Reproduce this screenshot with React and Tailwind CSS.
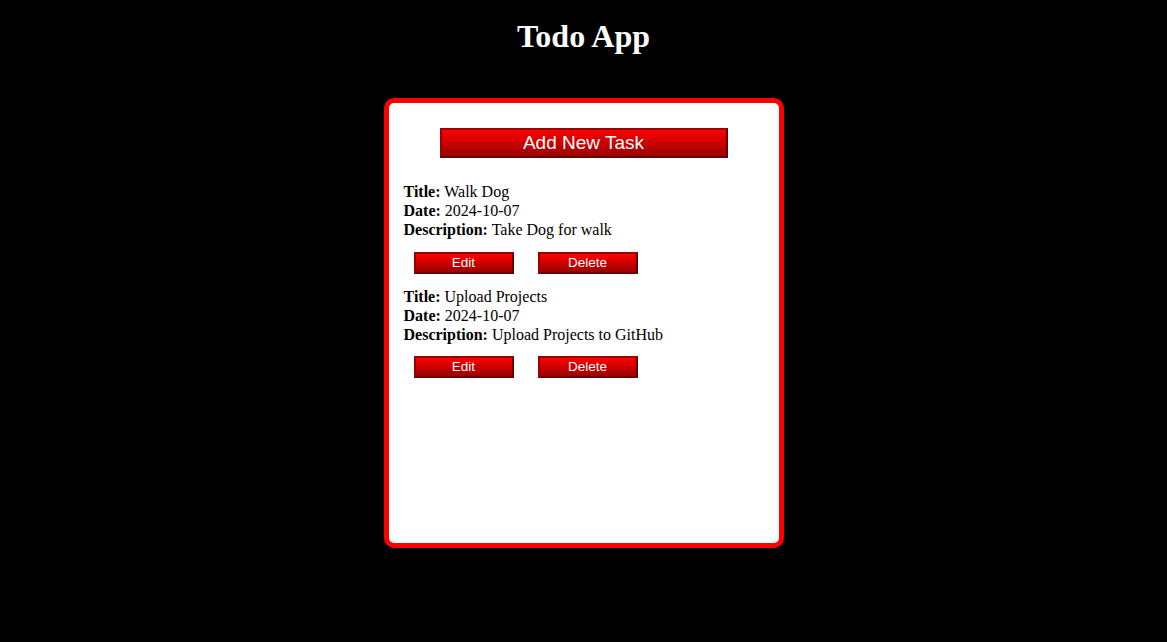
import React from "react";

const tasks = [
  { title: "Walk Dog", date: "2024-10-07", description: "Take Dog for walk" },
  { title: "Upload Projects", date: "2024-10-07", description: "Upload Projects to GitHub" },
];

function SmallButton({ children }) {
  return (
    <button className="w-[100px] h-[22px] border-2 border-solid border-t-[#9a0000] border-l-[#9a0000] border-b-[#6a0000] border-r-[#6a0000] bg-linear-to-b from-[#ff0000] to-[#9a0000] text-white text-[13.5px] leading-[18px] font-['Liberation_Sans',Arial,sans-serif] p-0">
      {children}
    </button>
  );
}

export default function App() {
  return (
    <div className="min-h-[642px] bg-black font-['Liberation_Serif','Times_New_Roman',serif] overflow-hidden">
      <h1 className="text-white text-[32px] font-bold leading-[37px] text-center mt-[18px]">Todo App</h1>
      <div className="mx-auto mt-[43px] w-[400px] h-[450px] bg-white border-[5px] border-[#ff0000] rounded-[10px] pt-[25px] pl-[15px] pr-[15px]">
        <div className="flex justify-center">
          <button className="w-[288px] h-[30px] border-2 border-solid border-t-[#9a0000] border-l-[#9a0000] border-b-[#6a0000] border-r-[#6a0000] bg-linear-to-b from-[#ff0000] to-[#9a0000] text-white text-[19px] leading-[26px] font-['Liberation_Sans',Arial,sans-serif] p-0">
            Add New Task
          </button>
        </div>
        <div className="mt-6">
          {tasks.map((t, i) => (
            <div key={i} className="mb-[13px]">
              <div className="text-black text-[16px] leading-[19px]">
                <div><strong>Title:</strong> {t.title}</div>
                <div><strong>Date:</strong> {t.date}</div>
                <div><strong>Description:</strong> {t.description}</div>
              </div>
              <div className="flex gap-6 ml-[10px] mt-[12.5px]">
                <SmallButton>Edit</SmallButton>
                <SmallButton>Delete</SmallButton>
              </div>
            </div>
          ))}
        </div>
      </div>
    </div>
  );
}
